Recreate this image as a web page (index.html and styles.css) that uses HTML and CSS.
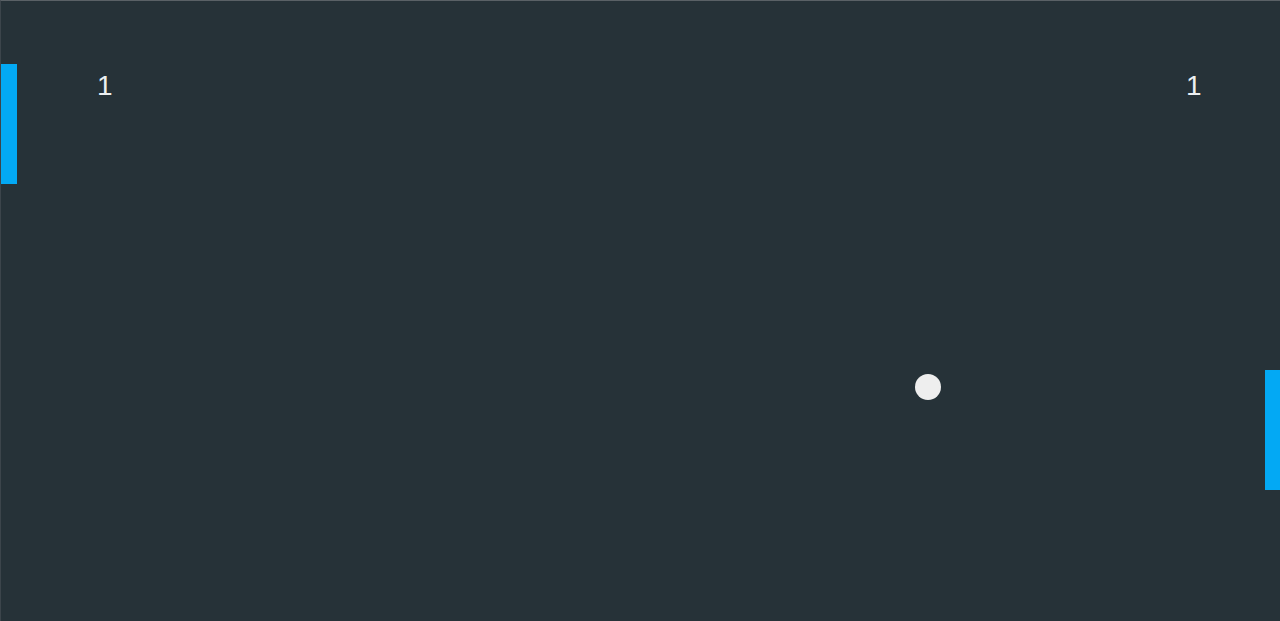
FILE: index.html
```
<!DOCTYPE html>
<html lang="en">
<head>
	<meta charset="UTF-8">
	<title>Pong</title>
	<link rel="stylesheet" href="styles.css">
</head>
<body>
	<div id="court">
		<div class="score score-left">1</div>
		<div class="score score-right">1</div>
		<div class="paddle paddle-left"></div>
		<div class="paddle paddle-right"></div>
		<div class="ball"></div>
	</div>
</body>
</html>
```

FILE: styles.css
```
*{margin: 0;padding: 0;box-sizing: border-box;}
html,body{
	height: 100%;
	background: #263238;
	overflow: hidden;
}
#court{
	position: relative;
	width: 1280px;
	height: 621px;
	background: #263238;
	border-top: 1px solid #5a6166;
	border-left: 1px solid #3c454b;
	font-family: "Liberation Sans", Arial, sans-serif;
}
.score{
	position: absolute;
	top: 69px;
	font-size: 28px;
	line-height: 32px;
	color: #eceff1;
}
.score-left{left: 96px;}
.score-right{left: 1185px;}
.paddle{
	position: absolute;
	width: 16px;
	height: 120px;
	background: #03a9f4;
}
.paddle-left{left: 0;top: 63px;}
.paddle-right{left: 1264px;top: 369px;}
.ball{
	position: absolute;
	left: 914px;
	top: 373px;
	width: 26px;
	height: 26px;
	border-radius: 50%;
	background: #eeeeee;
}
```
